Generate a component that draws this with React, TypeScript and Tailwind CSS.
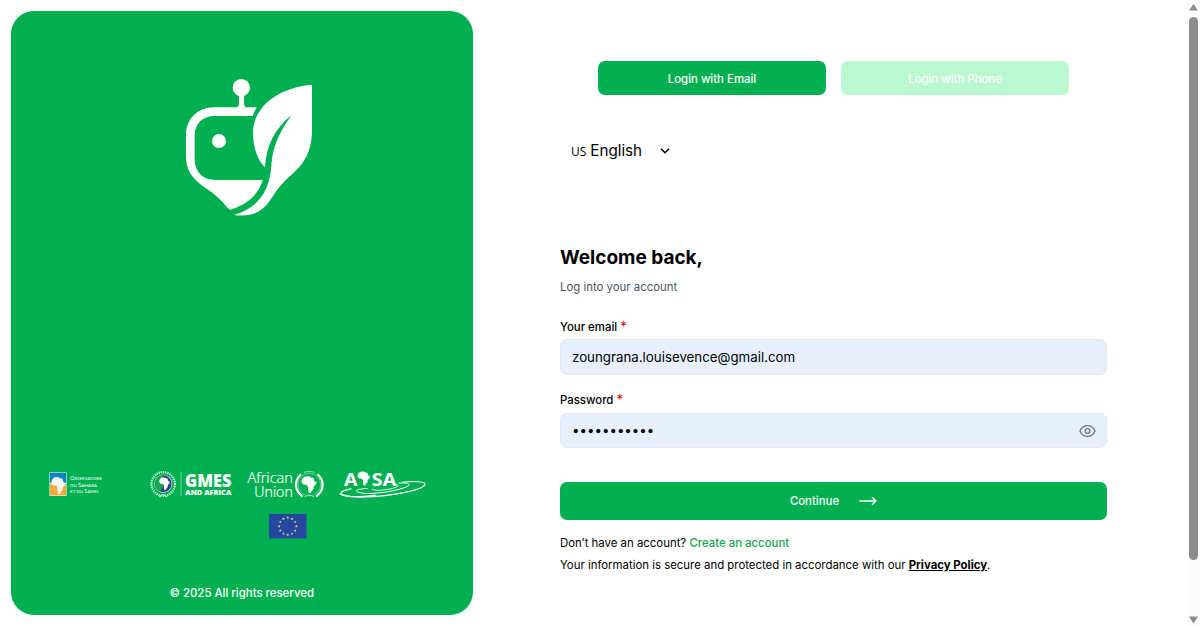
import React, { useState } from "react";

const AFRICA =
  "M22 6 L40 3 L55 5 L60 10 L76 12 L84 32 L98 36 L92 48 L78 62 L79 74 L68 84 L60 97 L50 97 L44 78 L46 66 L38 52 L16 50 L4 36 L8 20 Z";

const STARS = Array.from({ length: 12 }, (_, i) => {
  const angle = (i * Math.PI) / 6;
  return { x: 18.7 + 8.6 * Math.sin(angle), y: 12.5 - 8.6 * Math.cos(angle) };
});

function MainLogo() {
  return (
    <svg width="160" height="160" viewBox="0 0 480 480" fill="white">
      <circle cx="214" cy="68" r="26" />
      <path d="M207 88 V118 Q207 125 198 128 H230 Q222 125 222 118 V88 Z" />
      <path
        fillRule="evenodd"
        d="M261 127 H132 C82 127 48 162 48 212 V274 C48 314 66 340 97 362 C137 389 153 404 174 430 Q179 436 187 432 C235 415 266 388 278 345 H136 C98 345 74 320 74 282 V212 C74 176 98 153 134 153 H248 Q252 139 261 127 Z"
      />
      <circle cx="147" cy="228" r="21" />
      <path d="M426 59 C330 67 249 122 249 204 C249 246 263 285 285 307 C288 242 316 188 365 150 C325 205 307 249 304 302 C300 371 268 429 192 450 C237 457 274 444 296 412 C313 388 327 363 356 337 C401 298 426 264 426 192 Z" />
    </svg>
  );
}

function OssLogo() {
  return (
    <svg width="56" height="26" viewBox="0 0 56 26">
      <rect x="0.5" y="0.5" width="17" height="23.5" fill="#fff" />
      <rect x="1" y="1" width="16" height="10" fill="#1180c4" />
      <rect x="1" y="12" width="16" height="11.5" fill="#f7a83b" />
      <path d={AFRICA} fill="#f4f7f8" transform="translate(1.6 4.5) scale(.155 .18)" />
      <g fill="#fff" className="font-['Lato',sans-serif]" fontSize="5.2">
        <text x="21" y="8" textLength="32" lengthAdjust="spacingAndGlyphs">O<tspan fontSize="4.2">BSERVATOIRE</tspan></text>
        <text x="21" y="14.6" textLength="27" lengthAdjust="spacingAndGlyphs">
          <tspan fontSize="4.2">DU </tspan>S<tspan fontSize="4.2">AHARA</tspan>
        </text>
        <text x="21" y="21.2" textLength="29" lengthAdjust="spacingAndGlyphs">
          <tspan fontSize="4.2">ET DU </tspan>S<tspan fontSize="4.2">AHEL</tspan>
        </text>
      </g>
    </svg>
  );
}

function GmesLogo() {
  return (
    <svg className="overflow-visible" width="82" height="28" viewBox="0 0 82 28">
      <circle cx="13.2" cy="13" r="11.8" fill="none" stroke="#d9f3e2" strokeWidth="2.2" strokeDasharray="1.3 .9" />
      <circle cx="13.2" cy="12.7" r="9" fill="#fff" />
      <circle cx="13.2" cy="12.7" r="8.5" fill="#2b3f8c" />
      <path d="M13 4.2 A8.5 8.5 0 0 0 10 20.6 L13 16 Z" fill="#16a455" />
      <path d={AFRICA} fill="#fff" transform="translate(8.7 6) scale(.115 .135)" />
      <path d="M9 26 L13.2 23.5 L17.4 26" stroke="#d9f3e2" fill="none" />
      <path d="M31 1 V24.5" stroke="#8ad8aa" strokeWidth="0.9" />
      <g fill="#fff" className="font-['Open_Sans',sans-serif]" fontWeight="800">
        <text x="35" y="16" fontSize="17" textLength="46.5" lengthAdjust="spacingAndGlyphs">GMES</text>
        <text x="35.3" y="24.2" fontSize="7.6" textLength="46" lengthAdjust="spacingAndGlyphs">AND AFRICA</text>
      </g>
    </svg>
  );
}

function AfricanUnionLogo() {
  return (
    <svg className="overflow-visible" width="78" height="30" viewBox="0 0 78 30">
      <g fill="#fff" stroke="#fff" strokeWidth=".2" className="font-['Open_Sans',sans-serif]" fontWeight="300" fontSize="15">
        <text x="0.5" y="13.2" textLength="45.5" lengthAdjust="spacingAndGlyphs">African</text>
        <text x="7.3" y="27" textLength="38.5" lengthAdjust="spacingAndGlyphs">Union</text>
      </g>
      <circle cx="62.3" cy="14.5" r="11.3" fill="none" stroke="#8ad8aa" strokeWidth="0.8" />
      <g fill="none" stroke="#fff" strokeWidth="2">
        <path d="M54 4.2 C47 10.5 47 20 55.5 26.6" />
        <path d="M70.6 4.2 C77.6 10.5 77.6 20 69.1 26.6" />
      </g>
      <path d="M57 2.3 Q62.5 0 67.5 2.3 M57.5 27 L62.5 24.8 L67.5 27" stroke="#b8e8ca" fill="none" strokeWidth=".8" />
      <path d={AFRICA} fill="#fff" transform="translate(53.7 5.7) scale(.165 .178)" />
    </svg>
  );
}

function AosaLogo() {
  return (
    <svg className="overflow-visible" width="88" height="30" viewBox="0 0 88 30">
      <g fill="#fff" className="font-['Open_Sans',sans-serif]" fontWeight="700" fontSize="17.5">
        <text x="5" y="15.5" textLength="13.5" lengthAdjust="spacingAndGlyphs">A</text>
        <text x="32.5" y="15.5" textLength="25" lengthAdjust="spacingAndGlyphs">SA</text>
      </g>
      <path d={AFRICA} fill="#fff" transform="translate(17.8 1) scale(.138 .15)" />
      <g fill="none" stroke="#fff" strokeLinecap="round">
        <path d="M64 12 C76 11 87 11.5 86 14.5 C83 21 41 28.5 13 26.5 C-2 25.5 -1 21.5 12 18.9" strokeWidth="1.2" />
        <path d="M60 13 C72 12.5 73 15 66 17.5 C52 22.5 28 25 20 22.5 C14 20.5 19 18.9 28 18.5" strokeWidth="1" />
        <path d="M57 14.7 C63 15.1 57 18 49 19.3 C42 20.5 33 20.8 33 19.1" strokeWidth=".9" />
        <path d="M1 24 C6 27 18 27.5 36 25.5" strokeWidth="1.4" />
      </g>
    </svg>
  );
}

function EuFlag() {
  return (
    <svg width="38" height="25" viewBox="0 0 38 25">
      <rect width="37.5" height="24.5" fill="#2547a0" />
      {STARS.map((star, i) => (
        <path
          key={i}
          d="M0 -1.4 L.4 -.5 L1.4 -.4 L.7 .2 L.9 1.2 L0 .7 L-.9 1.2 L-.7 .2 L-1.4 -.4 L-.4 -.5 Z"
          fill="#d7d879"
          transform={`translate(${star.x} ${star.y - 0.3})`}
        />
      ))}
    </svg>
  );
}

function FieldLabel({ htmlFor, children }: { htmlFor: string; children: React.ReactNode }) {
  return (
    <label htmlFor={htmlFor} className="block h-5 text-[11.4px] leading-5 font-medium text-black">
      {children} <span className="text-[13.3px] leading-none font-normal text-red-600">*</span>
    </label>
  );
}

function ScrollBar() {
  return (
    <div className="flex h-full w-[13px] shrink-0 flex-col items-center bg-[#fcfcfc] pt-1 pb-[2px]">
      <svg width="9" height="7" viewBox="0 0 9 7" fill="#8b8b8b">
        <path d="M4.5 0 L9 6.5 H0 Z" />
      </svg>
      <div className="mt-[6px] h-[543px] w-[8.5px] rounded-full bg-[#8b8b8b]" />
      <svg className="mt-auto" width="9" height="8" viewBox="0 0 9 8" fill="#8b8b8b">
        <path d="M0 0.5 H9 L4.5 7.5 Z" />
      </svg>
    </div>
  );
}

function App() {
  const [method, setMethod] = useState("email");
  const [email, setEmail] = useState("zoungrana.louisevence@gmail.com");
  const [password, setPassword] = useState("louise12345");
  const [showPassword, setShowPassword] = useState(false);

  return (
    <div className="flex h-[626px] w-[1200px] overflow-hidden bg-white font-['Inter',sans-serif] text-black">
      <aside className="mt-[11px] ml-[11px] flex h-[604px] w-[461.5px] shrink-0 flex-col items-center rounded-[23px] bg-[#00b050]">
        <div className="mt-[54px] mr-[-17px]">
          <MainLogo />
        </div>
        <div className="mt-[245px] flex w-full items-center pl-[38px]">
          <OssLogo />
          <div className="ml-[45px]">
            <GmesLogo />
          </div>
          <div className="ml-[15px]">
            <AfricanUnionLogo />
          </div>
          <div className="ml-[14px]">
            <AosaLogo />
          </div>
        </div>
        <div className="mt-[14px] ml-[92.5px]">
          <EuFlag />
        </div>
        <p className="mt-auto mb-[12px] text-[11.4px] leading-5 font-medium text-white">
          © 2025 All rights reserved
        </p>
      </aside>

      <main className="ml-[87.5px] w-[547px] shrink-0">
        <div className="mt-[61px] ml-[38px] flex gap-[15px]">
          <button
            type="button"
            className={`h-[34px] w-[228px] rounded-[7px] pt-px text-[11.4px] leading-5 font-medium text-white ${method === "email" ? "bg-[#00b050]" : "bg-[#bbf7d0]"}`}
            onClick={() => setMethod("email")}
          >
            Login with Email
          </button>
          <button
            type="button"
            className={`h-[34px] w-[228px] rounded-[7px] pt-px text-[11.4px] leading-5 font-medium text-white ${method === "phone" ? "bg-[#00b050]" : "bg-[#bbf7d0]"}`}
            onClick={() => setMethod("phone")}
          >
            Login with Phone
          </button>
        </div>

        <button type="button" className="mt-[44px] ml-[11px] flex h-6 items-center">
          <span className="mr-1 pt-[2px] font-['Open_Sans',sans-serif] text-[12px] font-medium">US</span>
          <span className="text-[15.2px] leading-6">English</span>
          <svg className="ml-[18px]" width="10" height="6" viewBox="0 0 10 6" fill="none" stroke="black" strokeWidth="1.5">
            <path d="M1 0.8 L5 4.8 L9 0.8" />
          </svg>
        </button>

        <form onSubmit={(e) => e.preventDefault()}>
          <h1 className="mt-[81px] text-[19px] leading-7 font-bold">Welcome back,</h1>
          <p className="mt-[5px] text-[11.4px] leading-5 text-gray-600">Log into your account</p>

          <div className="mt-[20px]">
            <FieldLabel htmlFor="email">Your email</FieldLabel>
            <input
              id="email"
              type="text"
              value={email}
              onChange={(e) => setEmail(e.target.value)}
              className="mt-[2px] block h-[36px] w-full rounded-[7px] border border-[#e2e9f5] bg-[#e8f0fe] px-[11px] text-[13.3px]"
            />
          </div>

          <div className="mt-[15px]">
            <FieldLabel htmlFor="password">Password</FieldLabel>
            <div className="mt-[3px] flex h-[35px] items-center rounded-[7px] border border-[#e2e9f5] bg-[#e8f0fe] pr-[10px] pl-[11px]">
              <input
                id="password"
                type={showPassword ? "text" : "password"}
                value={password}
                onChange={(e) => setPassword(e.target.value)}
                className="min-w-0 flex-1 bg-transparent text-[13.3px] outline-none"
              />
              <button type="button" aria-label="Toggle password" onClick={() => setShowPassword(!showPassword)}>
                <svg width="17" height="14" viewBox="0 0 17 14" fill="none" stroke="#6b7280" strokeWidth="1.3">
                  <path d="M1 7 C2.5 3.2 5.3 1.6 8.5 1.6 C11.7 1.6 14.5 3.2 16 7 C14.5 10.8 11.7 12.4 8.5 12.4 C5.3 12.4 2.5 10.8 1 7 Z" />
                  <circle cx="8.5" cy="7" r="2.4" />
                </svg>
              </button>
            </div>
          </div>

          <button
            type="submit"
            className="mt-[34px] flex h-[38px] w-full items-center justify-center rounded-[7px] bg-[#00b050] text-[11.4px] leading-5 font-medium text-white"
          >
            Continue
            <svg className="ml-5" width="18" height="10" viewBox="0 0 18 10" fill="none" stroke="white" strokeWidth="1.4" strokeLinecap="round" strokeLinejoin="round">
              <path d="M0.8 5 H17 M13.4 1.4 L17 5 L13.4 8.6" />
            </svg>
          </button>
        </form>

        <p className="mt-[13px] text-[11.4px] leading-5">
          Don’t have an account? <a className="font-medium text-[#16a34a]">Create an account</a>
        </p>
        <p className="mt-[2px] text-[11.4px] leading-5 whitespace-nowrap">
          Your information is secure and protected in accordance with our{" "}
          <a className="font-bold underline">Privacy Policy</a>.
        </p>
      </main>

      <div className="ml-auto h-full">
        <ScrollBar />
      </div>
    </div>
  );
}

export default App;
